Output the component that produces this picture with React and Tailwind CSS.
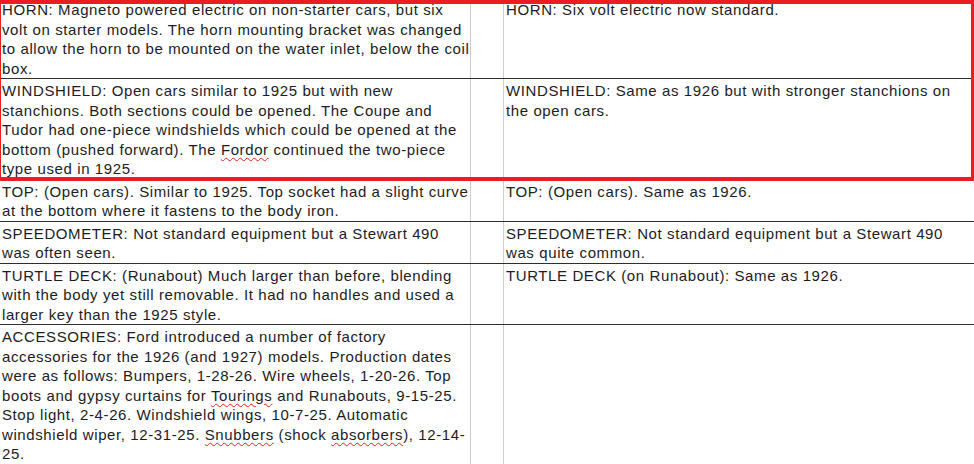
import React from 'react';

const Typo = ({ children }) => (
  <span className="underline decoration-wavy decoration-[#e0201a] decoration-1 underline-offset-[2px]">{children}</span>
);

const rows = [
  {
    left: 'HORN: Magneto powered electric on non-starter cars, but six volt on starter models. The horn mounting bracket was changed to allow the horn to be mounted on the water inlet, below the coil box.',
    right: 'HORN: Six volt electric now standard.',
  },
  {
    left: (
      <>
        WINDSHIELD: Open cars similar to 1925 but with new stanchions. Both sections could be opened. The Coupe and Tudor had one-piece windshields which could be opened at the bottom (pushed forward). The <Typo>Fordor</Typo> continued the two-piece type used in 1925.
      </>
    ),
    right: 'WINDSHIELD: Same as 1926 but with stronger stanchions on the open cars.',
  },
  {
    left: 'TOP: (Open cars). Similar to 1925. Top socket had a slight curve at the bottom where it fastens to the body iron.',
    right: 'TOP: (Open cars). Same as 1926.',
  },
  {
    left: 'SPEEDOMETER: Not standard equipment but a Stewart 490 was often seen.',
    right: 'SPEEDOMETER: Not standard equipment but a Stewart 490 was quite common.',
  },
  {
    left: 'TURTLE DECK: (Runabout) Much larger than before, blending with the body yet still removable. It had no handles and used a larger key than the 1925 style.',
    right: 'TURTLE DECK (on Runabout): Same as 1926.',
  },
  {
    left: (
      <>
        ACCESSORIES: Ford introduced a number of factory accessories for the 1926 (and 1927) models. Production dates were as follows: Bumpers, 1-28-26. Wire wheels, 1-20-26. Top boots and gypsy curtains for <Typo>Tourings</Typo> and Runabouts, 9-15-25. Stop light, 2-4-26. Windshield wings, 10-7-25. Automatic windshield wiper, 12-31-25. <Typo>Snubbers</Typo> (shock <Typo>absorbers</Typo>), 12-14-25.
      </>
    ),
    right: '',
  },
];

const App = () => {
  return (
    <div
      className="relative w-[974px] h-[464px] overflow-hidden bg-white text-[#1c1c24] text-[15px] leading-[19.5px] tracking-[0.6px]"
      style={{ fontFamily: '"Liberation Sans", Arial, sans-serif' }}
    >
      <div className="-mt-[2px]">
        {rows.map((row, i) => (
          <div key={i} className="grid grid-cols-[471px_33px_1fr] border-b border-[#2e2e2e]">
            <div className="pl-[2px] pt-[2px] border-r border-[#cdcdcd]">{row.left}</div>
            <div className="border-r border-[#cdcdcd]"></div>
            <div className="pl-[2px] pt-[2px] pr-[6px]">{row.right}</div>
          </div>
        ))}
      </div>

      {/* highlight frame */}
      <div className="absolute top-0 left-0 w-[974px] h-[181px] border-t-4 border-b-4 border-l border-r-[3px] border-[#ec1c24] pointer-events-none"></div>
    </div>
  );
};

export default App;
